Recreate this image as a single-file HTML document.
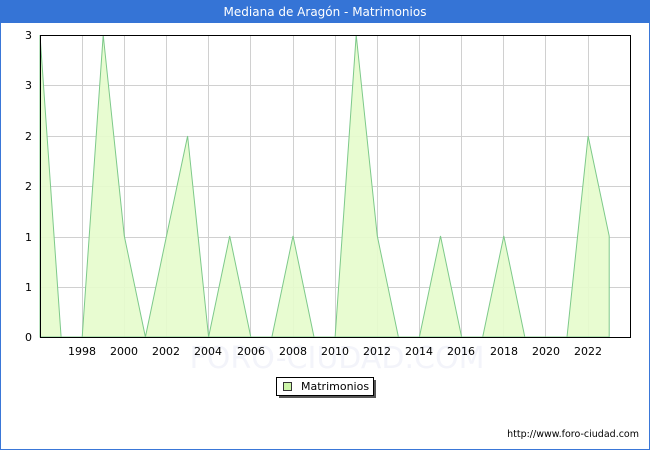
<!DOCTYPE html>
<html><head><style>
body{margin:0;width:650px;height:450px;overflow:hidden;background:#fff;font-family:"DejaVu Sans","Liberation Sans",sans-serif}
</style></head><body>
<svg width="650" height="450" xmlns="http://www.w3.org/2000/svg" font-family="DejaVu Sans, Liberation Sans, sans-serif">
<rect x="0.5" y="0.5" width="649" height="449" fill="#fff" stroke="#3a77d8"/>
<rect x="0" y="0" width="650" height="23" fill="#3574d6"/>
<text x="325" y="16" text-anchor="middle" font-size="12" fill="#fff">Mediana de Aragón - Matrimonios</text>
<text x="337" y="368" text-anchor="middle" font-size="30" fill="#f3f4fa">FORO-CIUDAD.COM</text>
<g stroke="#d0d0d0" stroke-width="1">
<line x1="40" y1="85.5" x2="630" y2="85.5"/><line x1="40" y1="136.5" x2="630" y2="136.5"/><line x1="40" y1="186.5" x2="630" y2="186.5"/><line x1="40" y1="237.5" x2="630" y2="237.5"/><line x1="40" y1="287.5" x2="630" y2="287.5"/>
<line x1="82.5" y1="35" x2="82.5" y2="337"/><line x1="124.5" y1="35" x2="124.5" y2="337"/><line x1="166.5" y1="35" x2="166.5" y2="337"/><line x1="208.5" y1="35" x2="208.5" y2="337"/><line x1="250.5" y1="35" x2="250.5" y2="337"/><line x1="293.5" y1="35" x2="293.5" y2="337"/><line x1="335.5" y1="35" x2="335.5" y2="337"/><line x1="377.5" y1="35" x2="377.5" y2="337"/><line x1="419.5" y1="35" x2="419.5" y2="337"/><line x1="461.5" y1="35" x2="461.5" y2="337"/><line x1="503.5" y1="35" x2="503.5" y2="337"/><line x1="545.5" y1="35" x2="545.5" y2="337"/><line x1="588.5" y1="35" x2="588.5" y2="337"/>
</g>
<polygon fill="#e6fccc" fill-opacity="0.9" stroke="#7dc98a" stroke-width="1" points="40,337 40,35 61.1,337 82.2,337 103.2,35 124.3,236 145.4,337 166.5,236 187.6,136 208.6,337 229.7,236 250.8,337 271.9,337 293,236 314,337 335.1,337 356.2,35 377.3,236 398.4,337 419.4,337 440.5,236 461.6,337 482.7,337 503.8,236 524.8,337 545.9,337 567,337 588.1,136 609.2,236 609.2,337"/>
<rect x="40.5" y="35.5" width="590" height="302" fill="none" stroke="#000"/>
<g font-size="11" fill="#000" text-anchor="end">
<text x="32" y="39">3</text><text x="32" y="89">3</text><text x="32" y="140">2</text><text x="32" y="190">2</text><text x="32" y="241">1</text><text x="32" y="291">1</text><text x="32" y="341">0</text>
</g>
<g font-size="11" fill="#000" text-anchor="middle">
<text x="82" y="355">1998</text><text x="124" y="355">2000</text><text x="166" y="355">2002</text><text x="208" y="355">2004</text><text x="251" y="355">2006</text><text x="293" y="355">2008</text><text x="335" y="355">2010</text><text x="377" y="355">2012</text><text x="419" y="355">2014</text><text x="461" y="355">2016</text><text x="504" y="355">2018</text><text x="546" y="355">2020</text><text x="588" y="355">2022</text>
</g>
<rect x="279" y="380" width="97" height="18" fill="#555"/>
<rect x="276.5" y="377.5" width="97" height="18" fill="#fff" stroke="#000"/>
<rect x="283.5" y="382.5" width="8" height="8" fill="#ccf5a8" stroke="#333"/>
<text x="301" y="390" font-size="11">Matrimonios</text>
<text x="639" y="437" text-anchor="end" font-size="9.5">http://www.foro-ciudad.com</text>
</svg>
</body></html>
